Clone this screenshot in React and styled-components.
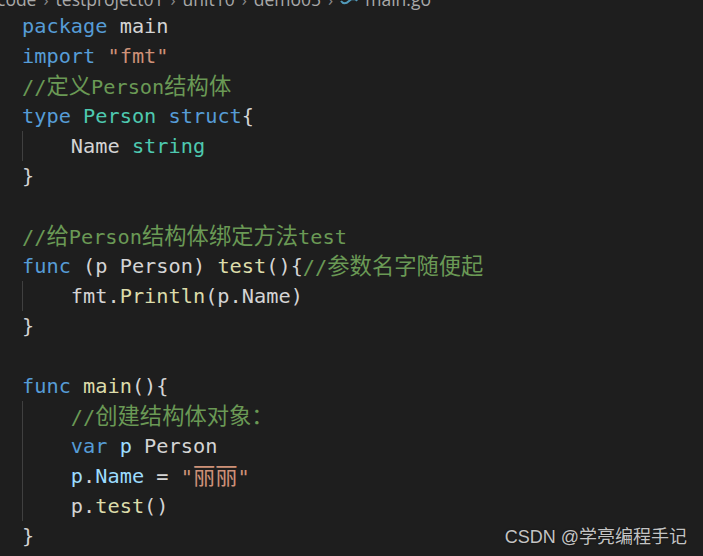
import React from 'react'
import styled, { createGlobalStyle } from 'styled-components'

const Global = createGlobalStyle`
  html, body {
    margin: 0;
    padding: 0;
    background: #1e1e1e;
  }
  body {
    width: 703px;
    height: 556px;
    overflow: hidden;
  }
`

const Editor = styled.div`
  position: relative;
  width: 703px;
  height: 556px;
  background: #1e1e1e;
  overflow: hidden;
`

const Crumbs = styled.div`
  height: 11px;
  overflow: hidden;
`

const CrumbRow = styled.div`
  display: flex;
  align-items: center;
  gap: 7px;
  margin-top: -13px;
  margin-left: -3px;
  height: 24px;
  font-family: "Open Sans", "Noto Sans", sans-serif;
  font-size: 17.5px;
  color: #a9a9a9;
  white-space: nowrap;
`

const Sep = styled.span`
  color: #8a8a8a;
  font-size: 17px;
`

const Code = styled.div`
  padding-left: 22px;
  font-family: "DejaVu Sans Mono", "Liberation Mono", monospace;
  font-size: 20.3px;
  color: #d4d4d4;
`

const Line = styled.div`
  display: flex;
  align-items: center;
  height: 30px;
  white-space: pre;
`

const Indent = styled.span`
  align-self: stretch;
  width: 4ch;
  flex: none;
  box-sizing: border-box;
  border-left: 1px solid #404040;
`

const colors = {
  kw: '#569cd6',
  str: '#ce9178',
  com: '#6a9955',
  type: '#4ec9b0',
  fn: '#dcdcaa',
  var: '#9cdcfe',
  plain: '#d4d4d4',
}

const Tok = styled.span`
  color: ${p => colors[p.$kind]};
`

const Cjk = styled.span`
  font-family: "Noto Sans CJK SC", sans-serif;
  font-size: 22.3px;
  line-height: 1;
`

const Mark = styled.div`
  position: absolute;
  right: 16px;
  bottom: 8px;
  font-family: "Liberation Sans", "Noto Sans CJK SC", sans-serif;
  font-size: 18px;
  color: #c4c4c4;
  text-shadow: 0 0 2px rgba(0, 0, 0, 0.6);
`

const splitCjk = text =>
  text.split(/([\u3000-\u9fff\uff00-\uffef]+)/).filter(Boolean).map((part, i) =>
    /[\u3000-\u9fff\uff00-\uffef]/.test(part) ? <Cjk key={i}>{part}</Cjk> : part
  )

const code = [
  [0, [['kw', 'package'], ['plain', ' main']]],
  [0, [['kw', 'import'], ['plain', ' '], ['str', '"fmt"']]],
  [0, [['com', '//定义Person结构体']]],
  [0, [['kw', 'type'], ['plain', ' '], ['type', 'Person'], ['plain', ' '], ['kw', 'struct'], ['plain', '{']]],
  [1, [['plain', 'Name '], ['type', 'string']]],
  [0, [['plain', '}']]],
  [0, []],
  [0, [['com', '//给Person结构体绑定方法test']]],
  [0, [['kw', 'func'], ['plain', ' (p Person) '], ['fn', 'test'], ['plain', '(){'], ['com', '//参数名字随便起']]],
  [1, [['plain', 'fmt.'], ['fn', 'Println'], ['plain', '(p.Name)']]],
  [0, [['plain', '}']]],
  [0, []],
  [0, [['kw', 'func'], ['plain', ' '], ['fn', 'main'], ['plain', '(){']]],
  [1, [['com', '//创建结构体对象：']]],
  [1, [['kw', 'var'], ['plain', ' '], ['var', 'p'], ['plain', ' Person']]],
  [1, [['var', 'p'], ['plain', '.'], ['var', 'Name'], ['plain', ' = '], ['str', '"丽丽"']]],
  [1, [['plain', 'p.'], ['fn', 'test'], ['plain', '()']]],
  [0, [['plain', '}']]],
]

const GoIcon = () => (
  <svg width="18" height="14" viewBox="0 0 18 14">
    <path d="M1 5c2-3 5-3 8 0s6 3 8 0M1 9c2 3 5 3 8 0s6-3 8 0" stroke="#519aba" strokeWidth="2" fill="none" />
  </svg>
)

const App = () => {
  return (
    <Editor>
      <Global />
      <Crumbs>
        <CrumbRow>
          <span>code</span><Sep>›</Sep>
          <span>testproject01</span><Sep>›</Sep>
          <span>unit10</span><Sep>›</Sep>
          <span>demo05</span><Sep>›</Sep>
          <GoIcon />
          <span>main.go</span>
        </CrumbRow>
      </Crumbs>
      <Code>
        {code.map(([indent, toks], i) => (
          <Line key={i}>
            {indent ? <Indent /> : null}
            {toks.map(([kind, text], j) => (
              <Tok key={j} $kind={kind}>{splitCjk(text)}</Tok>
            ))}
          </Line>
        ))}
      </Code>
      <Mark>CSDN @学亮编程手记</Mark>
    </Editor>
  )
}

export default App
